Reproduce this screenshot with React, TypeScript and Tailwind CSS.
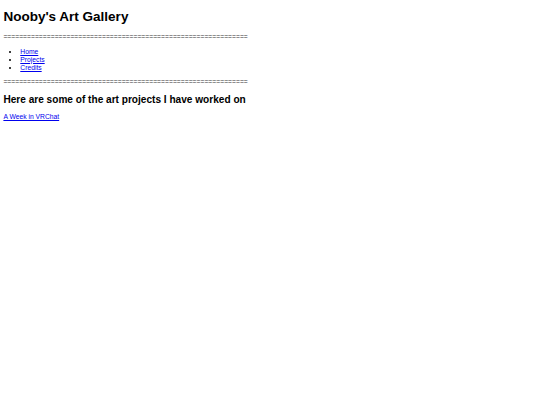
const RULE = "=".repeat(62);

export default function App() {
  return (
    <div className="min-h-[405px] bg-white px-[3.4px] py-px font-['Liberation_Sans',Arial,sans-serif] text-[6.75px] leading-[7.75px] text-black">
      <h1 className="mt-[8px] mb-[8.5px] text-[13.5px] leading-[15.5px] font-bold">Nooby's Art Gallery</h1>
      <p className="my-[6.75px] text-[#333]">{RULE}</p>
      <ul className="mt-[7.25px] mb-[6.75px] list-disc pl-[16.9px]">
        <li>
          <a href="#" className="text-[#0000ee] underline">Home</a>
        </li>
        <li>
          <a href="#" className="text-[#0000ee] underline">Projects</a>
        </li>
        <li>
          <a href="#" className="text-[#0000ee] underline">Credits</a>
        </li>
      </ul>
      <p className="my-[6.75px] text-[#333]">{RULE}</p>
      <h2 className="mt-[8.5px] mb-[7px] text-[10.1px] leading-[11.6px] font-bold">
        Here are some of the art projects I have worked on
      </h2>
      <p className="my-[6.75px]">
        <a href="#" className="text-[#0000ee] underline">A Week in VRChat</a>
      </p>
    </div>
  );
}
